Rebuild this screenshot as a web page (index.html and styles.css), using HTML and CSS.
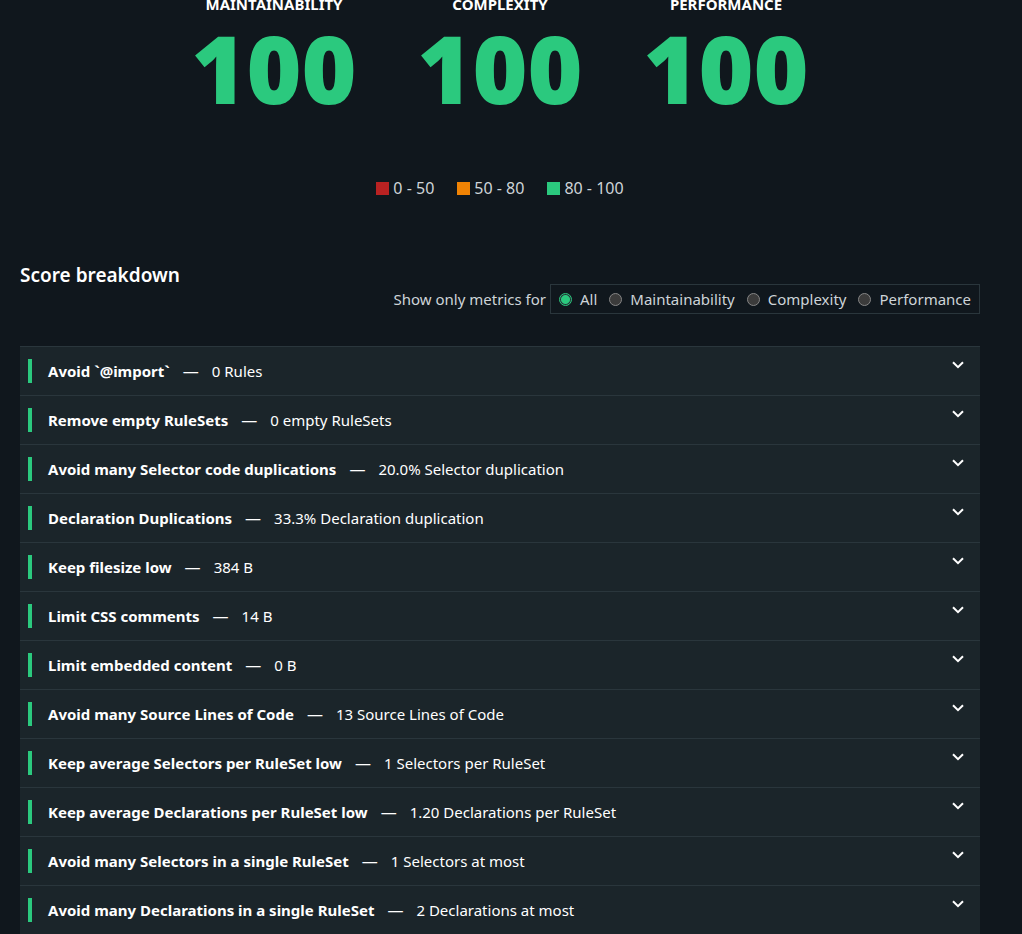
FILE: index.html
```
<!DOCTYPE html>
<html lang="en">
<head>
<meta charset="utf-8">
<meta name="viewport" content="width=device-width, initial-scale=1">
<title>CSS Code Quality</title>
<link rel="stylesheet" href="styles.css">
</head>
<body>
<main class="page">
  <dl class="scores">
    <div class="score"><dt class="score-label">Maintainability</dt><dd class="score-value">100</dd></div>
    <div class="score"><dt class="score-label">Complexity</dt><dd class="score-value">100</dd></div>
    <div class="score"><dt class="score-label">Performance</dt><dd class="score-value">100</dd></div>
  </dl>
  <ul class="legend">
    <li class="legend-item"><span class="swatch swatch-bad"></span>0 - 50</li>
    <li class="legend-item"><span class="swatch swatch-fair"></span>50 - 80</li>
    <li class="legend-item"><span class="swatch swatch-good"></span>80 - 100</li>
  </ul>
  <h2 class="heading">Score breakdown</h2>
  <div class="filter">
    <span id="filter-label">Show only metrics for</span>
    <div class="filter-options" role="radiogroup" aria-labelledby="filter-label">
      <label class="option"><input class="radio" type="radio" name="metric" checked>All</label>
      <label class="option"><input class="radio" type="radio" name="metric">Maintainability</label>
      <label class="option"><input class="radio" type="radio" name="metric">Complexity</label>
      <label class="option"><input class="radio" type="radio" name="metric">Performance</label>
    </div>
  </div>
  <svg class="symbols" aria-hidden="true"><symbol id="chevron" viewBox="0 0 12 8"><path d="M1 1.2 6 6.2 11 1.2" fill="none" stroke="#fff" stroke-width="2"/></symbol></svg>
  <div class="metrics">
    <details class="metric"><summary class="summary"><b class="name">Avoid `@import`</b><span class="dash">—</span><span class="value">0 Rules</span><svg class="chevron"><use href="#chevron"/></svg></summary></details>
    <details class="metric"><summary class="summary"><b class="name">Remove empty RuleSets</b><span class="dash">—</span><span class="value">0 empty RuleSets</span><svg class="chevron"><use href="#chevron"/></svg></summary></details>
    <details class="metric"><summary class="summary"><b class="name">Avoid many Selector code duplications</b><span class="dash">—</span><span class="value">20.0% Selector duplication</span><svg class="chevron"><use href="#chevron"/></svg></summary></details>
    <details class="metric"><summary class="summary"><b class="name">Declaration Duplications</b><span class="dash">—</span><span class="value">33.3% Declaration duplication</span><svg class="chevron"><use href="#chevron"/></svg></summary></details>
    <details class="metric"><summary class="summary"><b class="name">Keep filesize low</b><span class="dash">—</span><span class="value">384 B</span><svg class="chevron"><use href="#chevron"/></svg></summary></details>
    <details class="metric"><summary class="summary"><b class="name">Limit CSS comments</b><span class="dash">—</span><span class="value">14 B</span><svg class="chevron"><use href="#chevron"/></svg></summary></details>
    <details class="metric"><summary class="summary"><b class="name">Limit embedded content</b><span class="dash">—</span><span class="value">0 B</span><svg class="chevron"><use href="#chevron"/></svg></summary></details>
    <details class="metric"><summary class="summary"><b class="name">Avoid many Source Lines of Code</b><span class="dash">—</span><span class="value">13 Source Lines of Code</span><svg class="chevron"><use href="#chevron"/></svg></summary></details>
    <details class="metric"><summary class="summary"><b class="name">Keep average Selectors per RuleSet low</b><span class="dash">—</span><span class="value">1 Selectors per RuleSet</span><svg class="chevron"><use href="#chevron"/></svg></summary></details>
    <details class="metric"><summary class="summary"><b class="name">Keep average Declarations per RuleSet low</b><span class="dash">—</span><span class="value">1.20 Declarations per RuleSet</span><svg class="chevron"><use href="#chevron"/></svg></summary></details>
    <details class="metric"><summary class="summary"><b class="name">Avoid many Selectors in a single RuleSet</b><span class="dash">—</span><span class="value">1 Selectors at most</span><svg class="chevron"><use href="#chevron"/></svg></summary></details>
    <details class="metric"><summary class="summary"><b class="name">Avoid many Declarations in a single RuleSet</b><span class="dash">—</span><span class="value">2 Declarations at most</span><svg class="chevron"><use href="#chevron"/></svg></summary></details>
  </div>
</main>
</body>
</html>
```

FILE: styles.css
```
* { box-sizing: border-box; }

body {
  margin: 0;
  background: #10171d;
  color: #fff;
  font-family: "Segoe UI", "Noto Sans", sans-serif;
  font-size: 15px;
  line-height: 24px;
}

.page { padding: 0 42px 0 20px; }

.scores {
  display: grid;
  grid-template-columns: repeat(3, 226px);
  justify-content: center;
  margin: 0;
  text-align: center;
}

.score-label {
  font-weight: 700;
  line-height: 8px;
  text-transform: uppercase;
}

.score-value {
  margin: 0;
  color: #2bc97e;
  font-size: 94px;
  font-weight: 900;
  line-height: 120px;
}

.legend {
  display: flex;
  justify-content: center;
  gap: 23px;
  margin: 48px 0 0;
  padding: 0;
  list-style: none;
  color: #ced4d8;
  font-size: 16px;
}

.legend-item { display: flex; align-items: center; gap: 4px; }
.swatch { width: 13px; height: 13px; }
.swatch-bad { background: #b92222; }
.swatch-fair { background: #f08304; }
.swatch-good { background: #2bc97e; }

.heading {
  margin: 60px 0 0;
  font-size: 19px;
  font-weight: 600;
  line-height: 30px;
}

.filter {
  display: flex;
  justify-content: flex-end;
  align-items: center;
  gap: 4px;
  margin: -6px 0 32px;
  color: #ced4d8;
}

.filter-options {
  display: flex;
  gap: 12px;
  padding: 2px 8px;
  border: 1px solid #2a363c;
}

.option { display: flex; align-items: center; gap: 8px; }

.radio {
  appearance: none;
  width: 13px;
  height: 13px;
  margin: 0;
  border: 1px solid #858585;
  border-radius: 50%;
  background: #3b3b3b;
}

.radio:checked {
  border-color: #2bc97e;
  background: radial-gradient(circle, #2bc97e 4px, #263238 5px);
}

.symbols { display: none; }

.metric { border-top: 1px solid #2a363c; background: #1b252a; }

.summary {
  display: flex;
  align-items: center;
  padding: 12px 16px 12px 8px;
  list-style: none;
  cursor: pointer;
}

.name { padding-left: 16px; border-left: 4px solid #2bc97e; font-weight: 700; }
.dash { margin: 0 13px; font-size: 16px; }
.chevron { width: 12px; height: 8px; margin: 2px 0 auto auto; }
```
